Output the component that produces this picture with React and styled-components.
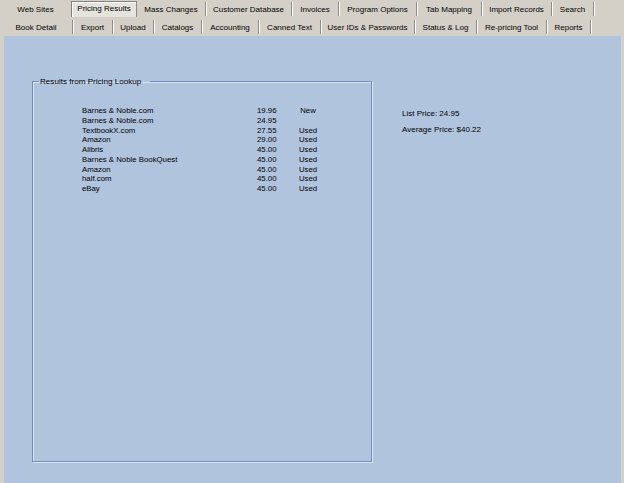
import React from "react";
import styled, { createGlobalStyle } from "styled-components";

const GlobalStyle = createGlobalStyle`
  html, body {
    margin: 0;
    padding: 0;
    background: #d4d0c8;
  }
  body {
    font-family: "Liberation Sans", Arial, sans-serif;
    color: #000;
  }
`;

const topTabs = [
  { label: "Web Sites", width: 72 },
  { label: "Pricing Results", width: 65, active: true },
  { label: "Mass Changes", width: 69 },
  { label: "Customer Database", width: 86 },
  { label: "Invoices", width: 47 },
  { label: "Program Options", width: 78 },
  { label: "Tab Mapping", width: 65 },
  { label: "Import Records", width: 70 },
  { label: "Search", width: 42 },
];

const bottomTabs = [
  { label: "Book Detail", width: 73 },
  { label: "Export", width: 40 },
  { label: "Upload", width: 41 },
  { label: "Catalogs", width: 48 },
  { label: "Accounting", width: 57 },
  { label: "Canned Text", width: 62 },
  { label: "User IDs & Passwords", width: 94 },
  { label: "Status & Log", width: 62 },
  { label: "Re-pricing Tool", width: 70 },
  { label: "Reports", width: 44 },
];

const results = [
  { site: "Barnes & Noble.com", price: "19.96", cond: "New" },
  { site: "Barnes & Noble.com", price: "24.95", cond: "" },
  { site: "TextbookX.com", price: "27.55", cond: "Used" },
  { site: "Amazon", price: "29.00", cond: "Used" },
  { site: "Alibris", price: "45.00", cond: "Used" },
  { site: "Barnes & Noble BookQuest", price: "45.00", cond: "Used" },
  { site: "Amazon", price: "45.00", cond: "Used" },
  { site: "half.com", price: "45.00", cond: "Used" },
  { site: "eBay", price: "45.00", cond: "Used" },
];

const Window = styled.div`
  width: 624px;
  height: 483px;
  background: #d4d0c8;
  display: flex;
  flex-direction: column;
  overflow: hidden;
`;

const TabRow = styled.div`
  display: flex;
  height: 18px;
  align-items: stretch;
`;

const Tab = styled.div`
  box-sizing: border-box;
  width: ${(p) => p.$w}px;
  margin: ${(p) => (p.$active ? "1px 0 1px" : "2px 0 2px")};
  font-size: 8px;
  line-height: 14px;
  text-align: center;
  white-space: nowrap;
  background: ${(p) => (p.$active ? "#e6e3dc" : "transparent")};
  border-right: 1px solid #8e8b85;
  box-shadow: ${(p) =>
    p.$active ? "inset 1px 1px 0 #fff, -1px 0 0 #808080" : "1px 0 0 #fff"};
  border-top: ${(p) => (p.$active ? "1px solid #808080" : "0")};
  padding-top: ${(p) => (p.$active ? "0" : "1px")};
`;

const Panel = styled.div`
  flex: 1;
  margin: 0 3px 0 4px;
  background: #b0c4de;
  display: flex;
  align-items: flex-start;
  padding: 41px 0 0 28px;
`;

const GroupBox = styled.fieldset`
  box-sizing: border-box;
  width: 340px;
  height: 385px;
  margin: 0;
  padding: 20px 0 0 0;
  border: 1px solid #6f8fc4;
  box-shadow: 1px 1px 0 #dbe4f1, inset 1px 1px 0 #dbe4f1;
`;

const Legend = styled.legend`
  margin-left: 6px;
  padding: 0 9px 0 1px;
  font-size: 8.1px;
  line-height: 9px;
`;

const ResultGrid = styled.div`
  display: grid;
  margin-left: 49px;
  grid-template-columns: 175px 41px 20px;
  grid-auto-rows: 9.75px;
  font-size: 7.8px;
  line-height: 9.75px;
`;

const Cell = styled.div`
  white-space: nowrap;
  text-align: ${(p) => (p.$center ? "center" : "left")};
`;

const Summary = styled.div`
  margin-left: 30px;
  padding-top: 32px;
  display: flex;
  flex-direction: column;
  gap: 7px;
  font-size: 8px;
  line-height: 9px;
`;

export default function App() {
  return (
    <>
      <GlobalStyle />
      <Window>
        <TabRow>
          {topTabs.map((t) => (
            <Tab key={t.label} $w={t.width} $active={t.active}>
              {t.label}
            </Tab>
          ))}
        </TabRow>
        <TabRow>
          {bottomTabs.map((t) => (
            <Tab key={t.label} $w={t.width}>
              {t.label}
            </Tab>
          ))}
        </TabRow>
        <Panel>
          <GroupBox>
            <Legend>Results from Pricing Lookup</Legend>
            <ResultGrid>
              {results.map((r, i) => (
                <React.Fragment key={i}>
                  <Cell>{r.site}</Cell>
                  <Cell>{r.price}</Cell>
                  <Cell $center>{r.cond}</Cell>
                </React.Fragment>
              ))}
            </ResultGrid>
          </GroupBox>
          <Summary>
            <div>List Price: 24.95</div>
            <div>Average Price: $40.22</div>
          </Summary>
        </Panel>
      </Window>
    </>
  );
}
